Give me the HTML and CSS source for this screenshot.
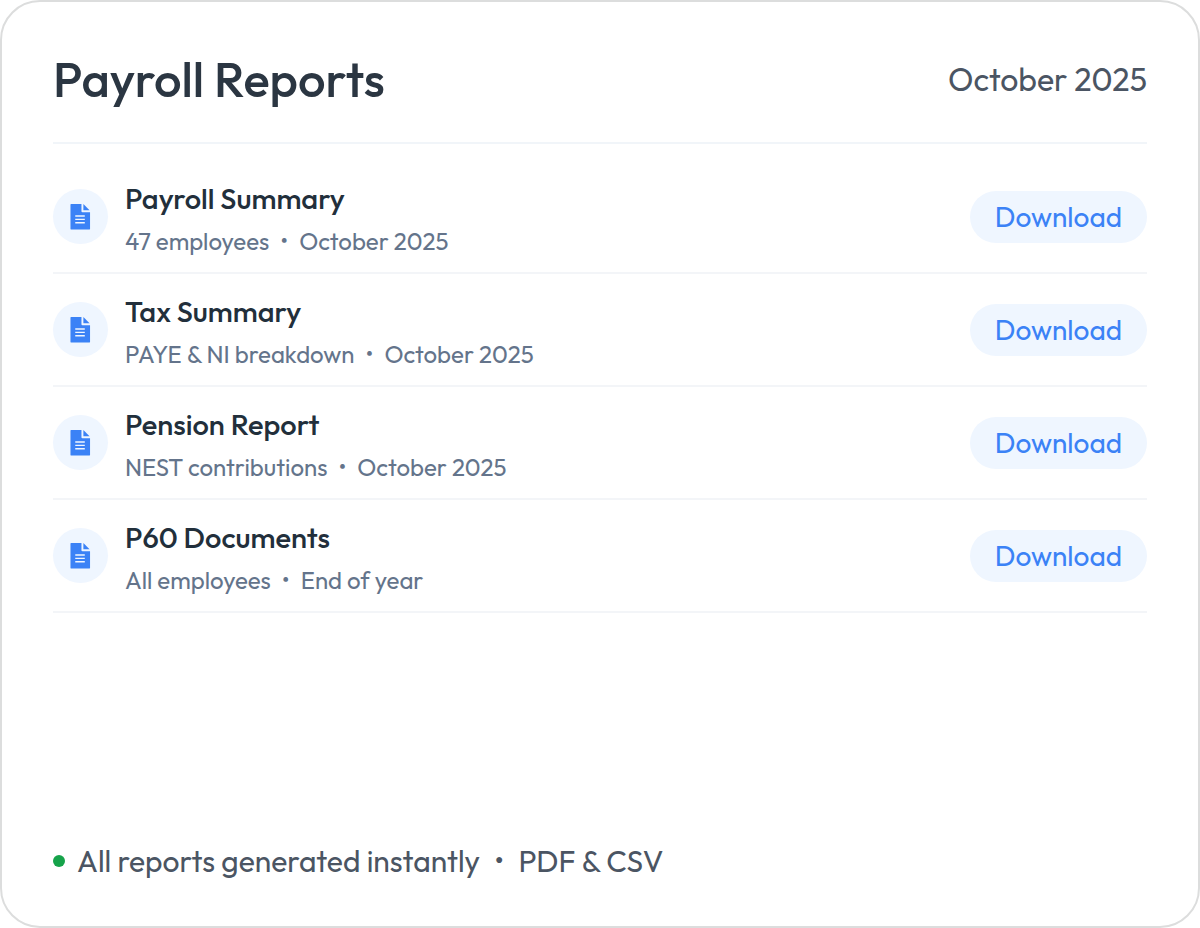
FILE: index.html
```html
<!DOCTYPE html>
<html lang="en">
<head>
  <meta charset="UTF-8" />
  <meta name="viewport" content="width=device-width, initial-scale=1.0"/>
  <title>Payroll Reports</title>
  <link rel="stylesheet" href="styles.css">
</head>
<body>
  <svg class="sprite" aria-hidden="true">
    <symbol id="icon-file" viewBox="0 0 22 28">
      <path fill="currentColor" d="M1 0.500H12v7.500q0 1 1 1h8v17.500q0 .5-.5.5H1q-.5 0-.5-.5V1q0-.5.5-.5z"/>
      <path fill="currentColor" d="M14 0.500l6.500 6.500H14z"/>
      <path stroke="#eff6ff" stroke-width="1.500" d="M5.500 13h10M5.500 16.500h10M5.500 20h10"/>
    </symbol>
  </svg>

  <main class="card">
    <header class="card-header">
      <h1>Payroll Reports</h1>
      <span class="period">October 2025</span>
    </header>

    <ul class="reports">
      <li class="report">
        <span class="report-icon"><svg><use href="#icon-file"/></svg></span>
        <div class="report-info">
          <h2>Payroll Summary</h2>
          <p>47 employees <span class="sep">•</span> October 2025</p>
        </div>
        <button type="button">Download</button>
      </li>
      <li class="report">
        <span class="report-icon"><svg><use href="#icon-file"/></svg></span>
        <div class="report-info">
          <h2>Tax Summary</h2>
          <p>PAYE &amp; NI breakdown <span class="sep">•</span> October 2025</p>
        </div>
        <button type="button">Download</button>
      </li>
      <li class="report">
        <span class="report-icon"><svg><use href="#icon-file"/></svg></span>
        <div class="report-info">
          <h2>Pension Report</h2>
          <p>NEST contributions <span class="sep">•</span> October 2025</p>
        </div>
        <button type="button">Download</button>
      </li>
      <li class="report">
        <span class="report-icon"><svg><use href="#icon-file"/></svg></span>
        <div class="report-info">
          <h2>P60 Documents</h2>
          <p>All employees <span class="sep">•</span> End of year</p>
        </div>
        <button type="button">Download</button>
      </li>
    </ul>

    <footer class="card-footer">
      <span class="status-dot"></span>
      <p>All reports generated instantly <span class="sep">•</span> PDF &amp; CSV</p>
    </footer>
  </main>
</body>
</html>
```
FILE: styles.css
```css
* {
  box-sizing: border-box;
}
body {
  margin: 0;
  background: #fff;
  font-family: Outfit, Lato, sans-serif;
}
h1, h2, p, ul {
  margin: 0;
  padding: 0;
}
.sprite {
  display: none;
}
.card {
  display: flex;
  flex-direction: column;
  min-height: 100vh;
  padding: 47px 51px;
  background: #fff;
  border: 2px solid #dcdddd;
  border-radius: 40px;
}
.card-header {
  display: flex;
  align-items: center;
  justify-content: space-between;
  padding-bottom: 33px;
  border-bottom: 2px solid #f1f5f9;
}
h1 {
  font-size: 49px;
  line-height: 60px;
  font-weight: 500;
  color: #2b3642;
}
.period {
  font-size: 32px;
  line-height: 40px;
  color: #4b5563;
}
.reports {
  padding-top: 17px;
  list-style: none;
}
.report {
  display: flex;
  align-items: center;
  gap: 17px;
  padding: 13px 0;
  border-bottom: 2px solid #f3f5f8;
}
.report-icon {
  display: flex;
  align-items: center;
  justify-content: center;
  width: 55px;
  height: 55px;
  border-radius: 50%;
  background: #eff6ff;
  color: #3b82f6;
}
.report-icon svg {
  width: 21px;
  height: 28px;
}
.report-info {
  flex: 1;
}
h2 {
  font-size: 29px;
  line-height: 50px;
  font-weight: 500;
  color: #222f3b;
}
.report-info p {
  font-size: 24px;
  line-height: 35px;
  color: #64748b;
}
.sep {
  margin: 0 6px;
}
button {
  padding: 8px 25px;
  border: none;
  border-radius: 26px;
  background: #eff6ff;
  color: #3b82f6;
  font-family: inherit;
  font-size: 28px;
  line-height: 36px;
  cursor: pointer;
}
button:hover {
  background: #dbeafe;
}
.card-footer {
  display: flex;
  align-items: center;
  gap: 12px;
  margin-top: auto;
  font-size: 30px;
  line-height: 36px;
  color: #4b5563;
}
.card-footer .sep {
  margin: 0 8px;
}
.status-dot {
  width: 12px;
  height: 12px;
  border-radius: 50%;
  background: #16a34a;
}
```
